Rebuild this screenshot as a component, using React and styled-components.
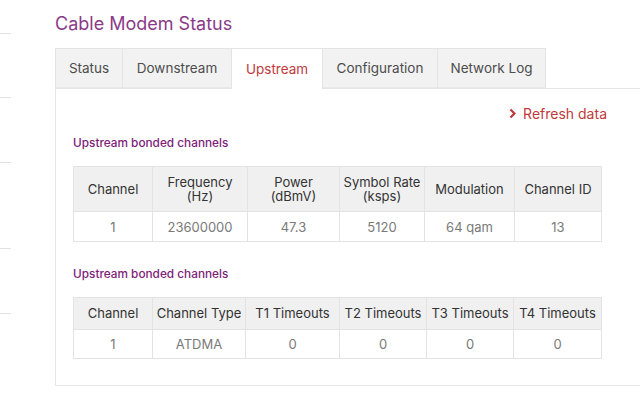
import styled, { createGlobalStyle } from "styled-components";

const GlobalStyle = createGlobalStyle`
  html, body {
    margin: 0;
    padding: 0;
    background: #ffffff;
    font-family: Inter, "Noto Sans", sans-serif;
    overflow: hidden;
  }
`;

const Page = styled.div`
  display: flex;
  width: 640px;
  height: 415px;
  overflow: hidden;
`;

const Sidebar = styled.ul`
  list-style: none;
  margin: 0;
  padding: 0;
  width: 11px;
  flex: none;
`;

const NavItem = styled.li`
  height: ${(p) => p.$h - 1}px;
  border-bottom: 1px solid #e2e2e2;
`;

const Main = styled.main`
  margin-left: 44px;
  width: 640px;
  flex: none;
`;

const Title = styled.h1`
  margin: 0;
  padding-top: 12px;
  height: 48px;
  box-sizing: border-box;
  line-height: 24px;
  font-size: 18px;
  font-weight: 400;
  color: #8a3a88;
`;

const TabBar = styled.nav`
  display: flex;
  height: 40px;
`;

const Tab = styled.button`
  width: ${(p) => p.$w}px;
  height: ${(p) => (p.$active ? 41 : 40)}px;
  box-sizing: border-box;
  padding: 0;
  font-family: inherit;
  font-size: 13.5px;
  color: ${(p) => (p.$active ? "#c0393b" : "#4d4d4d")};
  background: ${(p) => (p.$active ? "#ffffff" : "#f2f2f2")};
  border: 1px solid #e4e4e4;
  border-left-width: ${(p) => (p.$first ? 1 : 0)}px;
  border-bottom: ${(p) => (p.$active ? "none" : "1px solid #e8e8e8")};
  position: relative;
  z-index: ${(p) => (p.$active ? 1 : 0)};
  cursor: pointer;
`;

const Panel = styled.section`
  border: 1px solid #e6e6e6;
  height: 298px;
  box-sizing: border-box;
  padding: 0 0 0 17px;
`;

const RefreshRow = styled.div`
  width: 534px;
  display: flex;
  justify-content: flex-end;
  align-items: center;
  height: 24px;
  margin-top: 12px;
`;

const RefreshLink = styled.a`
  display: flex;
  align-items: center;
  gap: 7px;
  color: #c0393b;
  font-size: 14px;
  text-decoration: none;
  cursor: pointer;
`;

const SectionTitle = styled.h2`
  margin: ${(p) => p.$top}px 0 0;
  height: 18px;
  line-height: 18px;
  font-size: 11.8px;
  font-weight: 500;
  color: #7e2279;
`;

const Table = styled.table`
  width: 528px;
  margin-top: ${(p) => p.$top}px;
  border-collapse: collapse;
  table-layout: fixed;
  font-size: 13px;
`;

const HeadCell = styled.th`
  width: ${(p) => p.$w}px;
  height: ${(p) => p.$h}px;
  padding: 0;
  background: #f0f0f0;
  border: 1px solid #e3e3e3;
  color: #333333;
  font-weight: 400;
  line-height: 14.5px;
  text-align: center;
`;

const Cell = styled.td`
  height: ${(p) => p.$h}px;
  padding: 0;
  border: 1px solid #e3e3e3;
  color: #7a7a7a;
  text-align: center;
`;

const tabs = [
  { label: "Status", w: 68 },
  { label: "Downstream", w: 109 },
  { label: "Upstream", w: 91, active: true },
  { label: "Configuration", w: 115 },
  { label: "Network Log", w: 108 },
];

const bonded = {
  head: [
    { label: ["Channel"], w: 78 },
    { label: ["Frequency", "(Hz)"], w: 94 },
    { label: ["Power", "(dBmV)"], w: 91 },
    { label: ["Symbol Rate", "(ksps)"], w: 84 },
    { label: ["Modulation"], w: 89 },
    { label: ["Channel ID"], w: 86 },
  ],
  rows: [["1", "23600000", "47.3", "5120", "64 qam", "13"]],
};

const timeouts = {
  head: [
    { label: ["Channel"], w: 78 },
    { label: ["Channel Type"], w: 92 },
    { label: ["T1 Timeouts"], w: 93 },
    { label: ["T2 Timeouts"], w: 86 },
    { label: ["T3 Timeouts"], w: 86 },
    { label: ["T4 Timeouts"], w: 87 },
  ],
  rows: [["1", "ATDMA", "0", "0", "0", "0"]],
};

const Chevron = () => (
  <svg width="7" height="11" viewBox="0 0 7 11">
    <path d="M1.5 1.5 L5.5 5.5 L1.5 9.5" fill="none" stroke="#c0393b" strokeWidth="2.2" />
  </svg>
);

const DataTable = ({ data, top, headH, rowH }) => (
  <Table $top={top}>
    <thead>
      <tr>
        {data.head.map((h) => (
          <HeadCell key={h.label.join()} $w={h.w} $h={headH}>
            {h.label.map((line, i) => (
              <div key={i}>{line}</div>
            ))}
          </HeadCell>
        ))}
      </tr>
    </thead>
    <tbody>
      {data.rows.map((row, r) => (
        <tr key={r}>
          {row.map((v, i) => (
            <Cell key={i} $h={rowH}>
              {v}
            </Cell>
          ))}
        </tr>
      ))}
    </tbody>
  </Table>
);

export default function App() {
  return (
    <>
      <GlobalStyle />
      <Page>
        <Sidebar>
          {[34, 64, 65, 86, 65].map((h, i) => (
            <NavItem key={i} $h={h} />
          ))}
        </Sidebar>
        <Main>
          <Title>Cable Modem Status</Title>
          <TabBar>
            {tabs.map((t, i) => (
              <Tab key={t.label} $w={t.w} $active={t.active} $first={i === 0}>
                {t.label}
              </Tab>
            ))}
          </TabBar>
          <Panel>
            <RefreshRow>
              <RefreshLink>
                <Chevron />
                Refresh data
              </RefreshLink>
            </RefreshRow>
            <SectionTitle $top={9}>Upstream bonded channels</SectionTitle>
            <DataTable data={bonded} top={14} headH={44} rowH={29} />
            <SectionTitle $top={23}>Upstream bonded channels</SectionTitle>
            <DataTable data={timeouts} top={14} headH={31} rowH={28} />
          </Panel>
        </Main>
      </Page>
    </>
  );
}
